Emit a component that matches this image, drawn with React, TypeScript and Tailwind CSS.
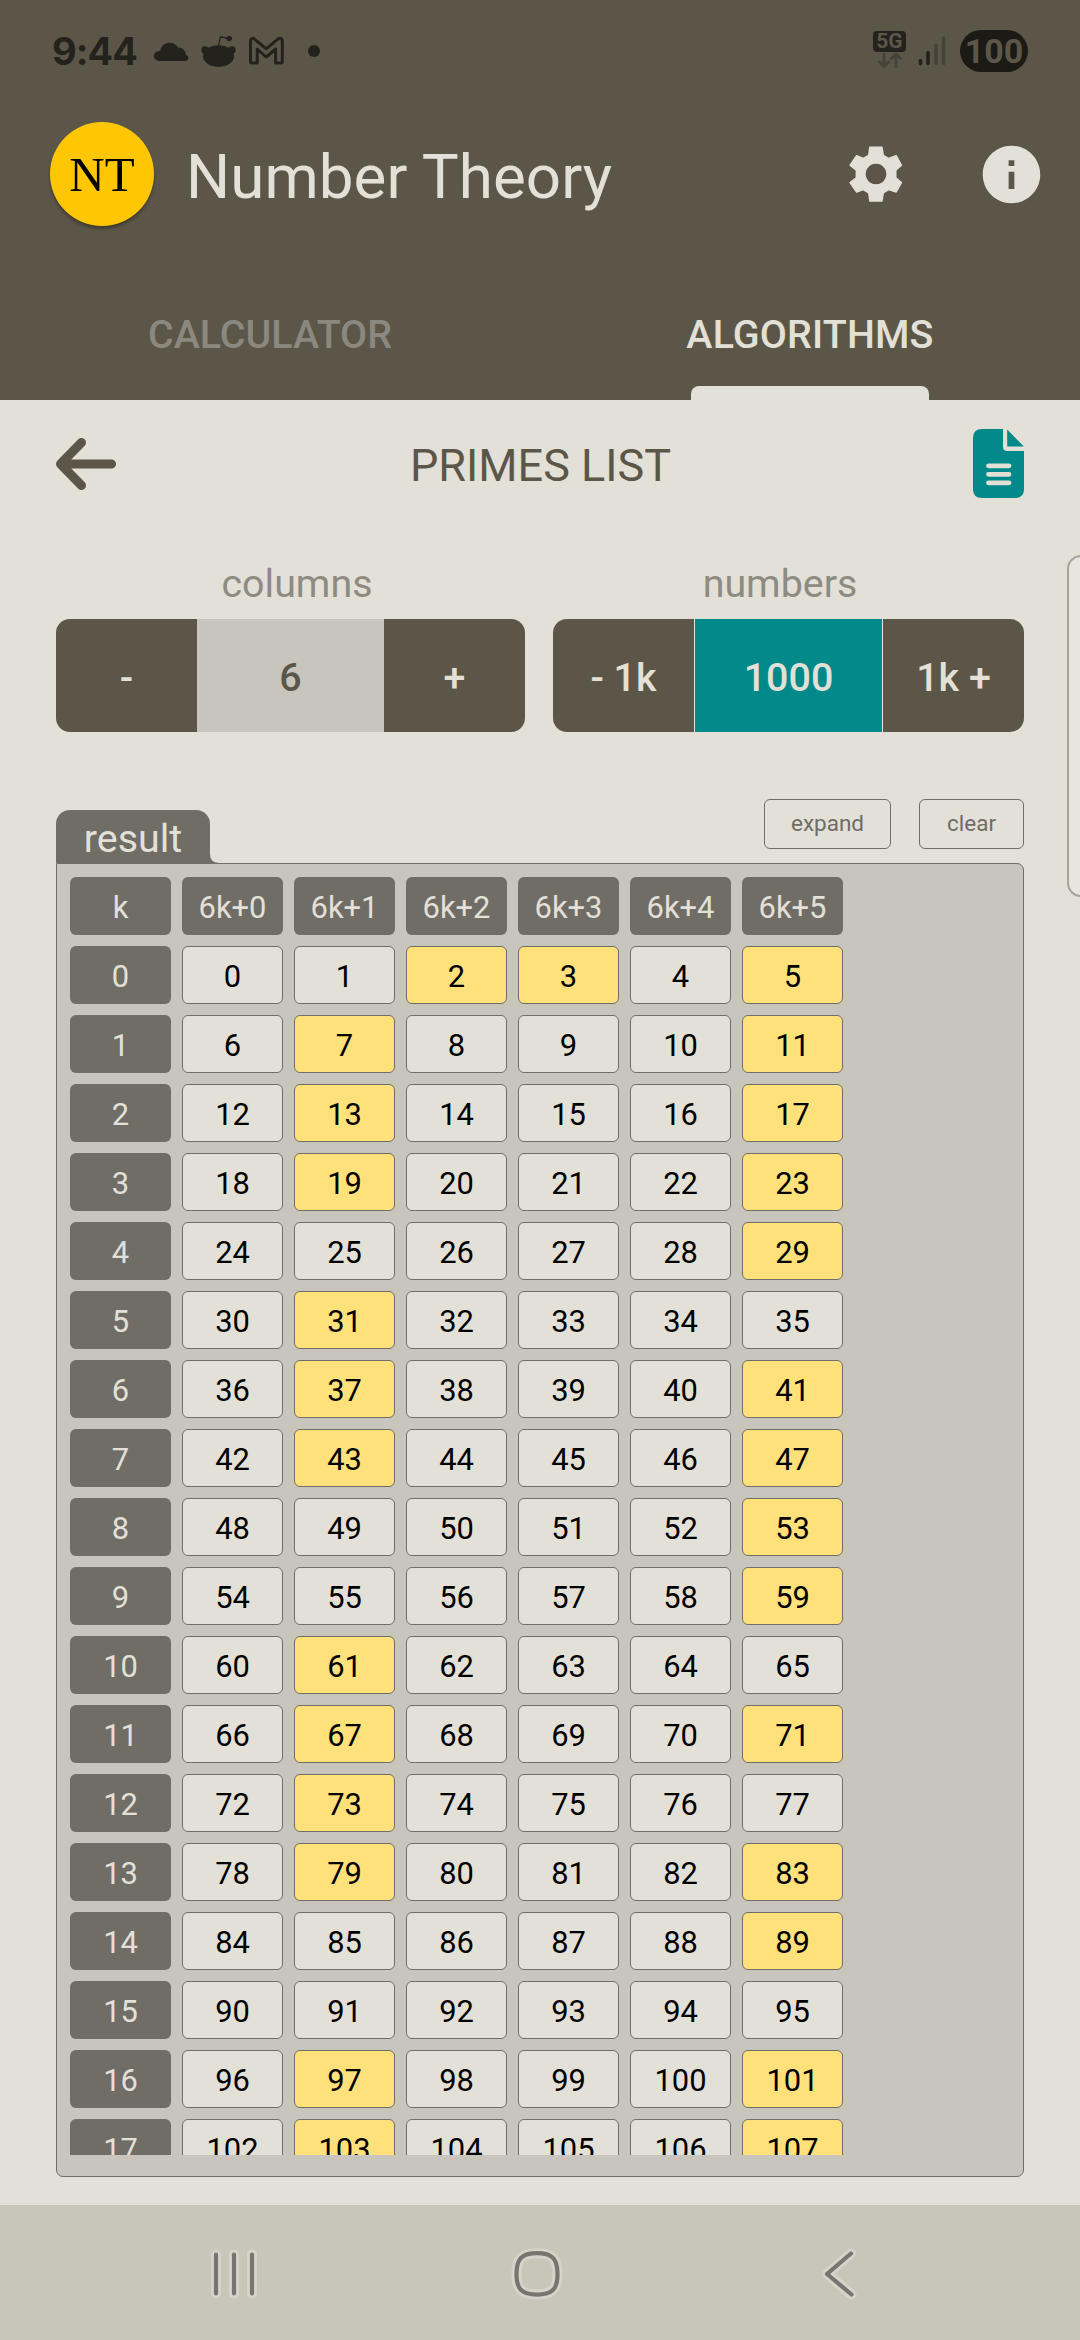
import React from "react";
import { MdInfo } from "react-icons/md";

const ROWS = Array.from({ length: 18 }, (_, k) => k);
const COLS = [0, 1, 2, 3, 4, 5];

function isPrime(n: number) {
  if (n < 2) return false;
  for (let d = 2; d * d <= n; d++) if (n % d === 0) return false;
  return true;
}

function StatusBar() {
  return (
    <div className="flex h-[102px] items-center pl-[52px] pr-[52px] text-[#24221d]">
      <span className="w-[86px] whitespace-nowrap font-['Inter'] text-[38px] font-bold leading-[102px] tracking-[-0.9px]">9:44</span>
      <svg className="ml-[16px]" width="36" height="32" viewBox="0 0 36 32" fill="currentColor">
        <path d="M5 26a5 5 0 0 1-.2-10 5 5 0 0 1 1.4-.1A9.600 9.600 0 0 1 24 12.600a7.500 7.500 0 0 1 8 7.500 3 3 0 0 1 0 5.900z" />
      </svg>
      <svg className="ml-[11px]" width="36" height="34" viewBox="0 0 36 34" fill="none">
        <ellipse cx="17.500" cy="22" rx="15.500" ry="10.800" fill="currentColor" />
        <circle cx="4" cy="16" r="3.700" fill="currentColor" />
        <circle cx="31" cy="16" r="3.700" fill="currentColor" />
        <path d="M17.500 12l1.800-9.200 8.500 1.700" stroke="currentColor" strokeWidth="1.300" />
        <circle cx="28.300" cy="4.500" r="2.700" fill="currentColor" />
      </svg>
      <svg className="ml-[11px]" width="37" height="30" viewBox="0 0 37 30" fill="none" stroke="currentColor" strokeWidth="3" strokeLinejoin="round">
        <path d="M2.500 5.200C2.500 2 5 1.800 6.600 3.200L18.200 12.800 29.800 3.200C31.400 1.800 34.300 2 34.300 5.200V25.600Q34.300 27 32.900 27H27.600V13L18.200 21 9.200 13V27H3.900Q2.500 27 2.500 25.600z" />
      </svg>
      <div className="ml-[23px] size-3 rounded-full bg-[#24221d]" />
      <div className="ml-auto mt-[-4px] flex h-[37px] w-[33px] flex-col items-center">
        <span className="flex h-[21px] w-[33px] shrink-0 items-center justify-center rounded-[4px] bg-[#24221d] font-['Roboto'] text-[21px] font-bold leading-none text-[#5d5749]">5G</span>
        <svg className="mt-px" width="24" height="15" viewBox="0 0 24 15" fill="none" stroke="#45423a" strokeWidth="3" strokeLinecap="round" strokeLinejoin="round">
          <path d="M6 1.500V13M1.500 9L6 13.500 10.500 9M18 13.500V2M13.500 5.500L18 1 22.500 5.500" />
        </svg>
      </div>
      <svg className="ml-[12px]" width="29" height="30" viewBox="0 0 29 30" strokeWidth="3.600" strokeLinecap="round">
        <path d="M2.500 24.500V27.500M10 16.500V27.500" stroke="#24221d" />
        <path d="M18 9V27.500M25.500 2V27.500" stroke="#45423a" />
      </svg>
      <div className="ml-[13px] flex h-[42px] w-[68px] items-center justify-center rounded-full bg-[#1b1a15] font-['Roboto'] text-[34px] font-bold leading-none text-[#5d5749]">
        100
      </div>
    </div>
  );
}

function Gear() {
  return (
    <svg width="56" height="58" viewBox="848 145 56 58">
      <path
        fillRule="evenodd"
        fill="#e3e0d8"
        stroke="#e3e0d8"
        strokeWidth="1.400"
        strokeLinejoin="round"
        d="M869.800 147.200H882L883.300 155.300 888.500 158.400 896.200 155.700 901.500 165.300 895.800 170.200V177.700L901.500 182.500 896.200 192 888.500 189.600 883.300 193 882 201H869.800L868.700 193 863.300 189.600 856.600 192 850 182.500 856.300 177.700V170.200L850 165.300 856.600 155.700 863.300 158.400 868.700 155.300ZM876 163a11 11 0 1 0 .01 0z"
      />
    </svg>
  );
}

function AppBar() {
  return (
    <div className="flex h-[144px] items-center pl-[50px] pr-[34px]">
      <div className="flex size-[104px] items-center justify-center rounded-full bg-[#ffc703] font-['Liberation_Serif'] text-[49px] leading-none text-black shadow-[0_3px_3px_rgba(0,0,0,0.3)]">
        NT
      </div>
      <h1 className="ml-[32px] mt-[8px] whitespace-nowrap font-['Roboto'] text-[61.9px] font-normal leading-none tracking-[0.08px] text-[#e3e0d8]">Number Theory</h1>
      <div className="ml-auto flex items-center gap-[73px]">
        <Gear />
        <MdInfo className="size-[69px] text-[#e3e0d8]" />
      </div>
    </div>
  );
}

function Tabs() {
  return (
    <div className="grid h-[154px] grid-cols-2 grid-rows-[154px] text-center text-[39.4px] font-medium leading-[178px]">
      <div className="text-[#8b887f]">CALCULATOR</div>
      <div className="relative tracking-[0.15px] text-[#e3e0d8]">
        ALGORITHMS
        <div className="absolute bottom-0 left-[151px] h-[14px] w-[238px] rounded-t-[8px] bg-[#e3e0d8]" />
      </div>
    </div>
  );
}

function TitleRow() {
  return (
    <div className="flex h-[129px] items-center justify-between pl-[56px] pr-[56px]">
      <svg className="mt-[-2px]" width="60" height="52" viewBox="0 0 60 52" fill="none" stroke="#5c5648" strokeWidth="9" strokeLinecap="round" strokeLinejoin="round">
        <path d="M25.500 4.500L4.500 26 25.500 47.500M5 26H55.500" />
      </svg>
      <h2 className="ml-[-8px] mt-[2px] text-[45px] leading-none text-[#5c5648]">PRIMES LIST</h2>
      <svg className="mt-[-2px]" width="51" height="69" viewBox="0 0 51 69">
        <path d="M9 0H30V17.500Q30 22 34.500 22H51V60Q51 69 42 69H9Q0 69 0 60V9Q0 0 9 0z" fill="#018a89" />
        <path d="M34.200 .6V17.500H50.800z" fill="#018a89" />
        <path d="M15.500 36.800H36M15.500 45.300H36M15.500 53.800H36" stroke="#e3e0d8" strokeWidth="4.800" strokeLinecap="round" />
      </svg>
    </div>
  );
}

function Controls() {
  return (
    <div className="flex h-[203px] justify-between px-[56px] pt-[32px]">
      <div className="w-[469px]">
        <div className="h-[58px] pl-[13px] text-center text-[39.4px] leading-[46px] text-[#8e8b82]">columns</div>
        <div className="flex h-[113px] overflow-hidden rounded-[14px] text-center text-[39.4px] font-medium leading-[117px] text-[#e3e0d8]">
          <div className="w-[141px] bg-[#5c5648]">-</div>
          <div className="w-[187px] bg-[#c8c5bd] text-[#5c5648]">6</div>
          <div className="w-[141px] bg-[#5c5648]">+</div>
        </div>
      </div>
      <div className="w-[471px]">
        <div className="h-[58px] pr-[17px] text-center text-[39.4px] leading-[46px] text-[#8e8b82]">numbers</div>
        <div className="flex h-[113px] gap-px overflow-hidden rounded-[14px] text-center text-[39.4px] font-medium leading-[117px] text-[#e3e0d8]">
          <div className="w-[141px] bg-[#5c5648]">- 1k</div>
          <div className="w-[187px] bg-[#018a89]">1000</div>
          <div className="w-[141px] bg-[#5c5648]">1k +</div>
        </div>
      </div>
    </div>
  );
}

function ResultHeader() {
  return (
    <div className="mx-[56px] flex h-[131px] items-end">
      <div className="h-[53px] w-[154px] rounded-t-[14px] bg-[#6f6d66] text-center text-[39.4px] leading-[57px] text-[#e3e0d8]">result</div>
      <svg width="9" height="9" viewBox="0 0 9 9">
        <path d="M0 0Q0 8.500 9 9H0z" fill="#6f6d66" />
      </svg>
      <div className="mb-[14px] ml-auto flex gap-[28px] text-center text-[22.5px] leading-[47px] text-[#6f6d66]">
        <div className="h-[50px] w-[127px] rounded-[6px] border border-[#6f6d66]">expand</div>
        <div className="h-[50px] w-[105px] rounded-[6px] border border-[#6f6d66]">clear</div>
      </div>
    </div>
  );
}

function Grid() {
  return (
    <div className="mx-[56px] h-[1314px] rounded-[7px] rounded-tl-none border border-[#6f6d66] bg-[#c8c5bd] px-[13px] pt-[13px]">
      <div className="grid h-[1278px] auto-rows-[58px] grid-cols-[repeat(7,101px)] gap-[11px] overflow-hidden text-center text-[30.9px] leading-[61px]">
        <div className="rounded-[6px] bg-[#6f6d66] text-[#e3e0d8]">k</div>
        {COLS.map((c) => (
          <div key={c} className="rounded-[6px] bg-[#6f6d66] text-[#e3e0d8]">6k+{c}</div>
        ))}
        {ROWS.map((k) => (
          <React.Fragment key={k}>
            <div className="rounded-[6px] bg-[#6f6d66] text-[#e3e0d8]">{k}</div>
            {COLS.map((c) => (
              <div
                key={c}
                className={
                  isPrime(6 * k + c)
                    ? "rounded-[6px] border border-[#6f6d66] bg-[#ffe17b] leading-[59px] text-black"
                    : "rounded-[6px] border border-[#6f6d66] bg-[#e3e0d8] leading-[59px] text-black"
                }
              >
                {6 * k + c}
              </div>
            ))}
          </React.Fragment>
        ))}
      </div>
    </div>
  );
}

function NavIcon({ d, width }: { d: string; width: number }) {
  return (
    <svg width={width} height="56" viewBox={`0 0 ${width} 56`} fill="none" strokeLinecap="round" strokeLinejoin="round">
      <path d={d} stroke="#d6d4ca" strokeWidth="10" />
      <path d={d} stroke="#76756f" strokeWidth="4.200" />
    </svg>
  );
}

function NavBar() {
  return (
    <div className="flex h-[135px] items-center justify-between bg-[#c8c6b9] pb-px pl-[206px] pr-[213px] pt-[3px]">
      <NavIcon width={56} d="M10 8.500V47.500M28 8.500V47.500M46 8.500V47.500" />
      <NavIcon width={56} d="M28 7.200C43 7.200 48.500 12.500 48.500 28S43 48.600 28 48.600 7.500 43.500 7.500 28 13 7.200 28 7.200z" />
      <NavIcon width={56} d="M40 7.500L16 28 40.500 48.500" />
    </div>
  );
}

export default function App() {
  return (
    <div className="relative flex h-[2340px] w-[1080px] flex-col overflow-hidden bg-[#e3e0d8] font-['Roboto',sans-serif]">
      <header className="h-[400px] shrink-0 bg-[#5c5648]">
        <StatusBar />
        <AppBar />
        <Tabs />
      </header>
      <main className="flex-1">
        <TitleRow />
        <Controls />
        <ResultHeader />
        <Grid />
      </main>
      <NavBar />
      <div className="absolute right-[-6px] top-[555px] h-[342px] w-[19px] rounded-l-[14px] border-2 border-[#a5a49d] bg-[#e6e5df]" />
    </div>
  );
}
